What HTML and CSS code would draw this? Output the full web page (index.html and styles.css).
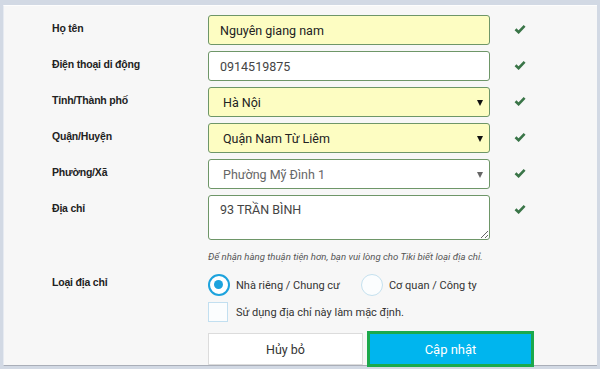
FILE: index.html
```html
<!DOCTYPE html>
<html lang="vi">

<head>
    <meta charset="UTF-8">
    <meta name="viewport" content="width=device-width, initial-scale=1.0">
    <title>Cập nhật địa chỉ</title>
    <link rel="stylesheet" href="styles.css">
</head>

<body>
    <div class="panel">
        <form class="address-form">
            <!-- Họ tên -->
            <label class="label">Họ tên</label>
            <input type="text" class="field filled" value="Nguyên giang nam">
            <span class="ok"><svg viewBox="0 0 12 10"><path d="M1.5 5.2 4.6 8.2 10.6 1.8"/></svg></span>

            <label class="label">Điện thoại di động</label>
            <input type="text" class="field" value="0914519875">
            <span class="ok"><svg viewBox="0 0 12 10"><path d="M1.5 5.2 4.6 8.2 10.6 1.8"/></svg></span>

            <!-- 셀렉트 -->
            <label class="label">Tỉnh/Thành phố</label>
            <div class="select filled"><span>Hà Nội</span></div>
            <span class="ok"><svg viewBox="0 0 12 10"><path d="M1.5 5.2 4.6 8.2 10.6 1.8"/></svg></span>

            <label class="label">Quận/Huyện</label>
            <div class="select filled"><span>Quận Nam Từ Liêm</span></div>
            <span class="ok"><svg viewBox="0 0 12 10"><path d="M1.5 5.2 4.6 8.2 10.6 1.8"/></svg></span>

            <label class="label">Phường/Xã</label>
            <div class="select muted"><span>Phường Mỹ Đình 1</span></div>
            <span class="ok"><svg viewBox="0 0 12 10"><path d="M1.5 5.2 4.6 8.2 10.6 1.8"/></svg></span>

            <label class="label">Địa chỉ</label>
            <textarea class="field area">93 TRẦN BÌNH</textarea>
            <span class="ok"><svg viewBox="0 0 12 10"><path d="M1.5 5.2 4.6 8.2 10.6 1.8"/></svg></span>

            <span></span>
            <p class="hint">Để nhận hàng thuận tiện hơn, bạn vui lòng cho Tiki biết loại địa chỉ.</p>
            <span></span>

            <label class="label">Loại địa chỉ</label>
            <div class="options">
                <div class="radios">
                    <span class="radio on"></span>
                    <span class="opt-text">Nhà riêng / Chung cư</span>
                    <span class="radio second"></span>
                    <span class="opt-text">Cơ quan / Công ty</span>
                </div>
                <div class="check-row">
                    <span class="checkbox"></span>
                    <span class="opt-text">Sử dụng địa chỉ này làm mặc định.</span>
                </div>
                <div class="buttons">
                    <button type="button" class="btn-cancel">Hủy bỏ</button>
                    <button type="button" class="btn-save">Cập nhật</button>
                </div>
            </div>
            <span></span>
        </form>
    </div>
</body>

</html>
```

FILE: styles.css
```css
html,
body {
    margin: 0;
    padding: 0;
}

body {
    background: #d2d9e4;
    width: 600px;
    height: 369px;
    overflow: hidden;
    font-family: "Liberation Sans", Arial, sans-serif;
}

.panel {
    margin: 5px 3px 0 3px;
    height: 361px;
    background: #f7f7f7;
    border-top: 1px solid #fdfdfd;
    border-left: 1px solid #e6eaf1;
    border-bottom: 1px solid #a9aeb8;
    box-sizing: border-box;
    padding: 9px 0 0 48px;
}

/* 폼 그리드 */
.address-form {
    display: grid;
    grid-template-columns: 156px 282px 50px;
    row-gap: 6px;
    align-items: start;
}

.label {
    font-size: 10.5px;
    font-weight: bold;
    color: #222;
    padding-top: 7px;
    letter-spacing: -0.2px;
}

.field,
.select {
    box-sizing: border-box;
    width: 282px;
    height: 30px;
    border: 1px solid #6e9668;
    border-radius: 3px;
    background: #fff;
    font-family: Roboto, "Noto Sans", sans-serif;
    font-size: 12.5px;
    color: #444;
    padding: 0 11px;
    margin: 0;
    outline: none;
}

.filled {
    background: #fdfdc2;
    color: #222;
}

.select {
    position: relative;
    display: flex;
    align-items: center;
    padding-left: 14px;
}

.select.muted {
    color: #666;
}

/* 화살표 */
.select::after {
    content: "";
    position: absolute;
    top: 12px;
    right: 6px;
    border-top: 6px solid #111;
    border-left: 3px solid transparent;
    border-right: 3px solid transparent;
}

.select.muted::after {
    border-top-color: #666;
}

.area {
    height: 45px;
    padding: 6px 11px;
    resize: vertical;
    color: #444;
}

.ok {
    display: flex;
    justify-content: flex-end;
    padding: 9px 14px 0 0;
}

.ok svg {
    width: 12px;
    height: 10px;
    fill: none;
    stroke: #3a7548;
    stroke-width: 2.6;
}

.hint {
    margin: 5px 0 0;
    line-height: 12px;
    font-family: Roboto, "Noto Sans", sans-serif;
    font-style: italic;
    font-size: 9.6px;
    color: #555;
    white-space: nowrap;
}

.options {
    display: flex;
    flex-direction: column;
}

.radios,
.check-row {
    display: flex;
    align-items: center;
    white-space: nowrap;
}

.radios {
    margin-top: 5px;
}

.opt-text {
    font-family: Roboto, "Noto Sans", sans-serif;
    font-size: 11px;
    color: #333;
    margin-left: 6px;
}

.radio {
    box-sizing: border-box;
    flex: none;
    width: 22px;
    height: 22px;
    border-radius: 50%;
    border: 1.5px solid #c5e1ef;
    background: #fbfdfe;
    position: relative;
}

.radio.on {
    border: 2.5px solid #1da3dd;
    background: #fff;
}

.radio.on::after {
    content: "";
    position: absolute;
    top: 4px;
    left: 4px;
    width: 9px;
    height: 9px;
    border-radius: 50%;
    background: #1da3dd;
}

.radio.second {
    margin-left: 21px;
}

.check-row {
    margin-top: 6px;
}

.checkbox {
    box-sizing: border-box;
    flex: none;
    width: 20px;
    height: 20px;
    border: 1.5px solid #c2dff0;
    background: #fbfdfe;
    margin-right: 2px;
}

.buttons {
    display: flex;
    align-items: center;
    margin-top: 9px;
    gap: 4px;
}

button {
    cursor: pointer;
    font-family: Roboto, "Noto Sans", sans-serif;
    font-size: 12.5px;
    flex: none;
}

.btn-cancel {
    width: 155px;
    height: 32px;
    background: #fff;
    border: 1px solid #dcdcdc;
    color: #333;
}

.btn-save {
    width: 167px;
    height: 36px;
    background: #00b5ee;
    border: 3px solid #1ba94c;
    color: #fff;
    font-size: 13px;
}
```
